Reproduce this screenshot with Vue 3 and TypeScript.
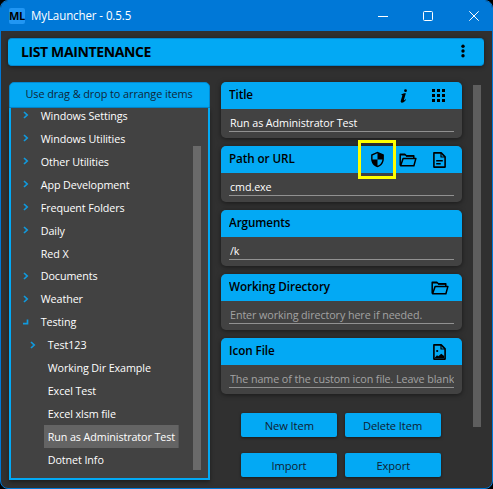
<script setup lang="ts">
interface TreeItem {
  label: string
  level: number
  state: 'closed' | 'open' | 'leaf'
  selected?: boolean
}

interface Field {
  title: string
  value?: string
  hint?: string
  icons: string[]
}

const items: TreeItem[] = [
  { label: 'Windows Settings', level: 0, state: 'closed' },
  { label: 'Windows Utilities', level: 0, state: 'closed' },
  { label: 'Other Utilities', level: 0, state: 'closed' },
  { label: 'App Development', level: 0, state: 'closed' },
  { label: 'Frequent Folders', level: 0, state: 'closed' },
  { label: 'Daily', level: 0, state: 'closed' },
  { label: 'Red X', level: 0, state: 'leaf' },
  { label: 'Documents', level: 0, state: 'closed' },
  { label: 'Weather', level: 0, state: 'closed' },
  { label: 'Testing', level: 0, state: 'open' },
  { label: 'Test123', level: 1, state: 'closed' },
  { label: 'Working Dir Example', level: 1, state: 'leaf' },
  { label: 'Excel Test', level: 1, state: 'leaf' },
  { label: 'Excel xlsm file', level: 1, state: 'leaf' },
  { label: 'Run as Administrator Test', level: 1, state: 'leaf', selected: true },
  { label: 'Dotnet Info', level: 1, state: 'leaf' },
]

const fields: Field[] = [
  { title: 'Title', value: 'Run as Administrator Test', icons: ['info', 'grid'] },
  { title: 'Path or URL', value: 'cmd.exe', icons: ['shield', 'folder', 'file'] },
  { title: 'Arguments', value: '/k', icons: [] },
  { title: 'Working Directory', hint: 'Enter working directory here if needed.', icons: ['folder'] },
  { title: 'Icon File', hint: 'The name of the custom icon file. Leave blank', icons: ['image'] },
]

const actions: string[] = ['New Item', 'Delete Item', 'Import', 'Export']
</script>

<template>
  <div class="window">
    <header class="titlebar">
      <span class="logo">ML</span>
      <span class="app-name">MyLauncher - 0.5.5</span>
      <svg class="controls" viewBox="0 0 104 12" fill="none" stroke="#fff" stroke-width="1">
        <path d="M1 6.5h10" />
        <rect x="46.5" y="1.500" width="9" height="9" rx="1" />
        <path d="M92.300 1.300l9.400 9.400M101.700 1.300l-9.400 9.400" />
      </svg>
    </header>

    <div class="banner">
      <h1>LIST MAINTENANCE</h1>
      <svg class="dots" viewBox="0 0 4 14">
        <circle cx="2" cy="2.200" r="1.700" />
        <circle cx="2" cy="7" r="1.700" />
        <circle cx="2" cy="11.800" r="1.700" />
      </svg>
    </div>

    <main class="content">
      <section class="tree">
        <div class="tree-head"><span>Use drag &amp; drop to arrange items</span></div>
        <div class="tree-body">
          <ul>
            <li v-for="item in items" :key="item.label" :class="{ nested: item.level === 1 }">
              <span class="arrow">
                <svg v-if="item.state !== 'leaf'" viewBox="0 0 6 8" fill="none" stroke="#109ade" stroke-width="1.700">
                  <path v-if="item.state === 'closed'" d="M1 1l3.200 3L1 7" />
                  <path v-else d="M4.500 1.500v4.100H0" />
                </svg>
              </span>
              <span class="label" :class="{ selected: item.selected }">{{ item.label }}</span>
            </li>
          </ul>
          <div class="tree-scroll"></div>
        </div>
      </section>

      <section class="details">
        <article v-for="field in fields" :key="field.title" class="card">
          <div class="card-head">
            <h2>{{ field.title }}</h2>
            <span v-for="icon in field.icons" :key="icon" class="icon" :class="icon">
              <svg v-if="icon === 'info'" viewBox="0 0 24 24">
                <circle cx="14.300" cy="4" r="2.100" />
                <path d="M8 9.700c2-1.300 4-1.900 6.800-1.900l-2.900 9.800c-.3 1.100.5 1.200 2.600-.8l.6.700c-2.200 2.800-4 4.500-6.200 4.500-1.500 0-2.200-1.300-1.700-2.900l2.200-7.600c.3-1-.2-1.100-1.300-.6z" />
              </svg>
              <svg v-else-if="icon === 'grid'" viewBox="0 0 13 13" shape-rendering="crispEdges">
                <path d="M0 0h3v3H0zM5 0h3v3H5zM10 0h3v3h-3zM0 5h3v3H0zM5 5h3v3H5zM10 5h3v3h-3zM0 10h3v3H0zM5 10h3v3H5zM10 10h3v3h-3z" />
              </svg>
              <svg v-else-if="icon === 'shield'" viewBox="0 0 24 24">
                <path d="M12 1L3 5v6c0 5.550 3.840 10.740 9 12 5.160-1.260 9-6.450 9-12V5l-9-4zm0 10.990h7c-.53 4.120-3.280 7.790-7 8.940V12H5V6.300l7-3.110v8.800z" />
              </svg>
              <svg v-else-if="icon === 'folder'" viewBox="0 0 18 14" fill="none" stroke="#000" stroke-width="1.500" stroke-linejoin="round">
                <path d="M1.200 12.600V1.200h4.600l1.600 1.500h7.400v2.400" />
                <path d="M1.200 1.800h5M7 3.100h7.500" />
                <path d="M4.100 5.400h12.800l-2 7.400H1.600z" />
              </svg>
              <svg v-else viewBox="0 0 13 16" fill="none" stroke="#000" stroke-width="1.600" stroke-linejoin="round">
                <path d="M.9.900h7.300l3.900 4v10.200H.9z" />
                <path d="M8 1v4h4" stroke-width="1.200" />
                <path v-if="icon === 'file'" d="M3.200 8.700h6.600M3.200 11.700h4.500" stroke-width="1.500" />
                <g v-else>
                  <path d="M2 13.600l2-2.300 1.300 1L8.300 9.800 11.200 12v2H2z" fill="#000" stroke="none" />
                  <circle cx="4.200" cy="7" r="1.100" fill="#000" stroke="none" />
                </g>
              </svg>
              <span v-if="icon === 'shield'" class="highlight"></span>
            </span>
          </div>
          <div class="card-body">
            <div class="entry" :class="{ hint: field.hint }">
              <span>{{ field.value ?? field.hint }}</span>
            </div>
          </div>
        </article>

        <div class="actions">
          <button v-for="action in actions" :key="action" type="button">
            <span>{{ action }}</span>
          </button>
        </div>
      </section>

      <div class="page-scroll"></div>
    </main>
  </div>
</template>

<style>
body {
  background: #000;
  overflow: hidden;
}
</style>

<style scoped>
* {
  box-sizing: border-box;
}

.window {
  width: 493px;
  height: 489px;
  overflow: hidden;
  border: 1px solid #0078d7;
  border-radius: 8px;
  background: #303030;
  color: #fff;
  font-family: 'Open Sans', 'Noto Sans', sans-serif;
  font-size: 11.5px;
  letter-spacing: -0.1px;
}

.titlebar {
  display: flex;
  align-items: center;
  height: 30px;
  padding-left: 8px;
  background: #0078d7;
}

.logo {
  width: 16px;
  height: 16px;
  border-radius: 2px;
  background: #2196f3;
  color: #000;
  font-size: 11px;
  font-weight: 700;
  line-height: 16px;
  text-align: center;
  letter-spacing: -0.4px;
}

.app-name {
  flex: 1;
  margin-left: 6px;
  font-size: 12px;
  line-height: 16px;
  transform: scaleX(0.96);
  transform-origin: left;
}

.controls {
  width: 104px;
  height: 12px;
  margin-right: 11px;
}

.banner {
  display: flex;
  align-items: center;
  justify-content: space-between;
  height: 28px;
  margin: 7px 8px 0 7px;
  padding: 0 19px 0 13px;
  border: 1px solid #0288d1;
  border-width: 1px 0;
  border-radius: 4px;
  background: #03a9f4;
  box-shadow: 0 1px 4px rgb(0 0 0 / 45%);
  color: #000;
}

.banner h1 {
  margin: 0;
  font-size: 14px;
  font-weight: 700;
  line-height: 20px;
  letter-spacing: -0.38px;
}

.dots {
  width: 4px;
  height: 14px;
  margin-bottom: 2px;
}

.content {
  display: flex;
  align-items: flex-start;
  padding: 16px 0 0 8px;
}

.tree {
  width: 201px;
  height: 398px;
}

.tree-head {
  height: 26px;
  border: 1px solid #0288d1;
  border-radius: 5px 5px 0 0;
  background: #03a9f4;
  color: #102638;
  line-height: 22px;
  text-align: center;
}

.tree-head span {
  display: inline-block;
  transform: scaleX(0.95);
}

.tree-body {
  display: flex;
  justify-content: space-between;
  height: 372px;
  padding-right: 7px;
  overflow: hidden;
  border: 1.5px solid #03a9f4;
  border-width: 0 2px 2px;
  background: #424242;
  box-shadow: 0 2px 4px rgb(0 0 0 / 40%);
}

.tree ul {
  margin: -4px 0 0;
  padding: 0;
  list-style: none;
}

.tree li {
  display: flex;
  align-items: center;
  height: 22.930px;
  padding-left: 12px;
}

.tree li.nested {
  padding-left: 19px;
}

.arrow {
  display: flex;
  width: 14px;
}

.arrow svg {
  width: 6px;
  height: 8px;
}

.label {
  height: 23px;
  padding: 0 4px;
  line-height: 24px;
  white-space: nowrap;
  transform: scaleX(0.935);
  transform-origin: left;
}

.label.selected {
  background: #646464;
}

.tree-scroll {
  width: 8px;
  height: 324px;
  margin-top: 38px;
  background: #6a6a6a;
}

.details {
  width: 241px;
  margin-left: 11px;
}

.card {
  height: 55.500px;
  margin-bottom: 8.500px;
  border-radius: 5px;
  background: #424242;
  box-shadow: 0 1px 5px rgb(0 0 0 / 50%);
}

.card-head {
  display: flex;
  align-items: center;
  height: 27px;
  padding: 0 16px 0 8px;
  border-radius: 5px 5px 0 0;
  background: #03a9f4;
  color: #000;
}

.card h2 {
  flex: 1;
  margin: 0;
  font-size: 12.5px;
  font-weight: 600;
  line-height: 18px;
  padding-bottom: 1px;
  letter-spacing: -0.1px;
  transform: scaleX(0.935);
  transform-origin: left;
}

.icon {
  position: relative;
  display: flex;
  margin-left: 16px;
}

.icon svg {
  width: 13px;
  height: 16px;
}

.icon.info svg {
  width: 16px;
  height: 16px;
}

.icon.info {
  margin-right: 15px;
}

.icon.grid {
  margin-left: 5px;
  margin-right: 1px;
}

.icon.grid svg {
  height: 13px;
}

.icon.shield svg {
  width: 17px;
  height: 17px;
}

.icon.folder {
  margin-left: 13px;
}

.icon.folder svg {
  width: 18px;
  height: 14px;
}

.icon.folder:last-child {
  margin-right: -3px;
}

.highlight {
  position: absolute;
  top: -11px;
  left: -11px;
  width: 38px;
  height: 39px;
  border: 3px solid #ff0;
}

.card-body {
  padding: 4px 8px 0;
}

.entry {
  height: 19px;
  padding-left: 1px;
  overflow: hidden;
  border-bottom: 1px solid #919191;
  line-height: 20px;
  white-space: nowrap;
}

.entry span {
  display: inline-block;
  transform: scaleX(0.935);
  transform-origin: left;
}

.entry.hint {
  color: #a3a3a3;
}

.actions {
  display: grid;
  grid-template-columns: 96px 96px;
  gap: 16px 8px;
  padding: 11px 0 0 20px;
}

.actions button {
  height: 24px;
  padding: 0;
  border: 0;
  border-radius: 2px;
  background: #03a9f4;
  box-shadow: 0 1px 3px rgb(0 0 0 / 50%);
  color: #102030;
  font: inherit;
  font-weight: 500;
  letter-spacing: inherit;
}

.actions span {
  display: inline-block;
  transform: scaleX(0.97);
}

.page-scroll {
  width: 8px;
  height: 342px;
  margin: 3px 0 0 11px;
  background: #5e5e5e;
}
</style>
